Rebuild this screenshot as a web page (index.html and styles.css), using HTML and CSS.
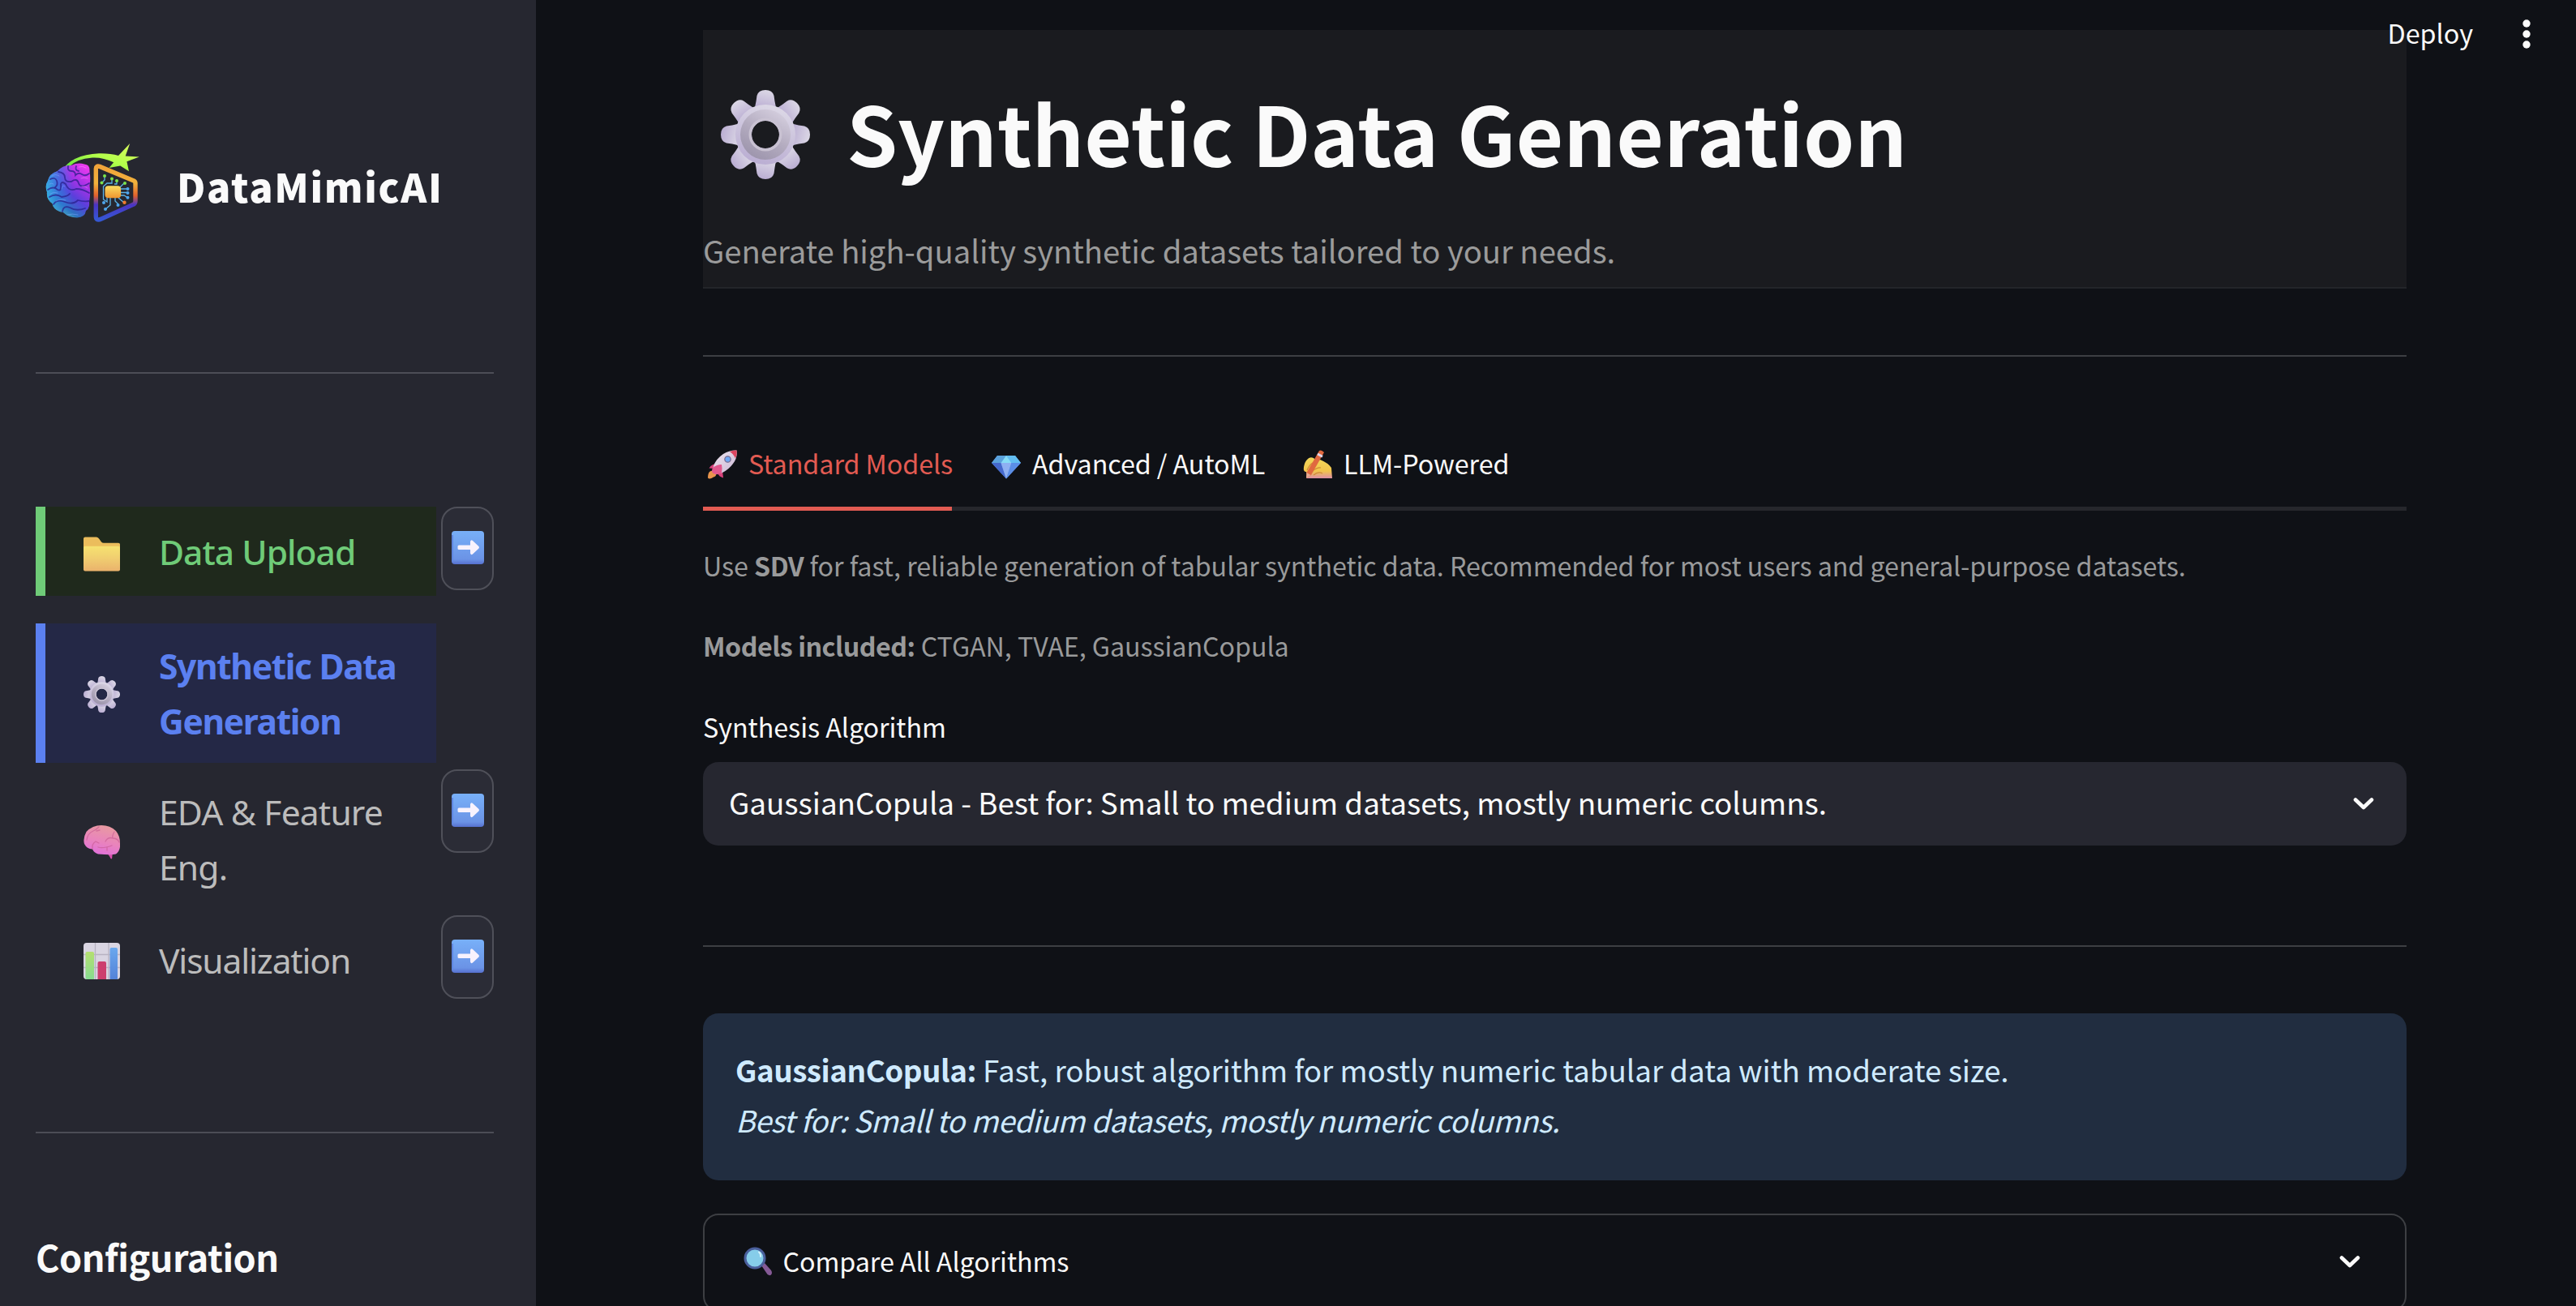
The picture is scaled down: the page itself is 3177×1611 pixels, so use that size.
FILE: index.html
```html
<!DOCTYPE html>
<html lang="en">
<head>
<meta charset="utf-8">
<title>DataMimicAI</title>
<link rel="stylesheet" href="styles.css">
</head>
<body>
<svg class="defs" aria-hidden="true">
  <defs>
    <linearGradient id="gearFill" x1="0.6" y1="0" x2="0.3" y2="1"><stop offset="0" stop-color="#dcd8e6"/><stop offset="1" stop-color="#b9acd2"/></linearGradient>
    <linearGradient id="gearRing" x1="0.8" y1="0" x2="0.2" y2="1"><stop offset="0" stop-color="#d6d0e0"/><stop offset="0.5" stop-color="#b4acc0"/><stop offset="1" stop-color="#9a92aa"/></linearGradient>
    <linearGradient id="arrowFill" x1="0" y1="0" x2="0" y2="1"><stop offset="0" stop-color="#78b0f8"/><stop offset="0.85" stop-color="#6b93e6"/><stop offset="1" stop-color="#5670cf"/></linearGradient>
    <symbol id="gear" viewBox="0 0 110 110">
      <g fill="url(#gearFill)">
        <g id="teeth">
          <path d="M40 24 Q43 20 43.500 14 L44.500 7 Q46.500 0 55 0 Q63.500 0 65.500 7 L66.500 14 Q67 20 70 24Z"/>
          <path d="M40 86 Q43 90 43.500 96 L44.500 103 Q46.500 110 55 110 Q63.500 110 65.500 103 L66.500 96 Q67 90 70 86Z"/>
        </g>
        <use href="#teeth" transform="rotate(90 55 55)"/>
        <use href="#teeth" transform="rotate(45 55 55)"/>
        <use href="#teeth" transform="rotate(-45 55 55)"/>
        <path fill-rule="evenodd" d="M55 18a37 37 0 1 0 0 74a37 37 0 1 0 0-74ZM55 38a17 17 0 1 1 0 34a17 17 0 1 1 0-34Z"/>
      </g>
      <path fill="url(#gearRing)" fill-rule="evenodd" d="M55 24a31 31 0 1 0 0 62a31 31 0 1 0 0-62ZM55 38a17 17 0 1 1 0 34a17 17 0 1 1 0-34Z"/>
      <circle cx="55" cy="55" r="19" fill="none" stroke="#c9c2d2" stroke-width="3"/>
    </symbol>
    <symbol id="arrow" viewBox="0 0 40 41">
      <rect width="40" height="41" rx="4" fill="url(#arrowFill)"/>
      <path d="M1 5V37" stroke="#5f86e0" stroke-width="2"/>
      <path d="M9 17.500H23V13Q24 10 26 12L33.500 19Q34.500 20.300 33.500 21.500L26 28.500Q24 30.500 23 27.500V23H9Q7.500 23 7.500 21.500V19Q7.500 17.500 9 17.500Z" fill="#f8f2fd"/>
    </symbol>
    <symbol id="chevron" viewBox="0 0 26 17">
      <path d="M3 3.500L13 13L23 3.500" fill="none" stroke="#fafafa" stroke-width="4.600" stroke-linecap="round" stroke-linejoin="round"/>
    </symbol>
  </defs>
</svg>

<aside class="sidebar">
  <div class="brand">
    <svg class="brand-logo" viewBox="0 0 116 97">
      <defs>
        <linearGradient id="brainBase" x1="0.9" y1="0" x2="0.25" y2="1"><stop offset="0" stop-color="#f43cf0"/><stop offset="0.3" stop-color="#a932e6"/><stop offset="0.55" stop-color="#5a3fdc"/><stop offset="0.78" stop-color="#2c73c0"/><stop offset="1" stop-color="#66dfa8"/></linearGradient>
        <linearGradient id="brainEdge" x1="0" y1="0" x2="1" y2="0"><stop offset="0" stop-color="#37b6e6" stop-opacity="0.9"/><stop offset="0.35" stop-color="#2f7fe0" stop-opacity="0.5"/><stop offset="0.6" stop-color="#2f7fe0" stop-opacity="0"/></linearGradient>
        <linearGradient id="frame" x1="0" y1="0" x2="0" y2="1"><stop offset="0" stop-color="#f0a43a"/><stop offset="0.32" stop-color="#f2b23c"/><stop offset="0.55" stop-color="#e2622c"/><stop offset="0.72" stop-color="#4a34c4"/><stop offset="1" stop-color="#3557d4"/></linearGradient>
        <linearGradient id="comet" x1="0" y1="1" x2="1" y2="0"><stop offset="0" stop-color="#4fd83c"/><stop offset="0.5" stop-color="#b2ff4a"/><stop offset="1" stop-color="#dcf860"/></linearGradient>
        <linearGradient id="chip" x1="0" y1="0" x2="0" y2="1"><stop offset="0" stop-color="#fbdc60"/><stop offset="1" stop-color="#ee9530"/></linearGradient>
      </defs>
      <path d="M20 34Q32 14 66 12.300Q80 12 90 15L104.200 0L98.700 15.600L115.800 16.600L100.400 22.300L103 34.300L92.300 27.600L78.600 30L84.200 23.300Q70 16.800 58 17.600Q38 19 29 29Z" fill="url(#comet)"/>
      <path d="M48 25.500Q55 26 54.500 34Q56 44 54.500 52Q56 62 54 72Q55 80 50 83Q49 91 39 91.500Q28 91 22 85Q10 83 8.500 74Q1 69 2 60Q-1 52 3 46Q5 37 15 34Q22 26 32 27Q40 23 48 25.500Z" fill="url(#brainBase)"/>
      <path d="M48 25.500Q55 26 54.500 34Q56 44 54.500 52Q56 62 54 72Q55 80 50 83Q49 91 39 91.500Q28 91 22 85Q10 83 8.500 74Q1 69 2 60Q-1 52 3 46Q5 37 15 34Q22 26 32 27Q40 23 48 25.500Z" fill="url(#brainEdge)"/>
      <g fill="none" stroke-linecap="round" stroke-width="1.800" stroke="#2a1f8c" stroke-opacity="0.75">
        <path d="M28 28Q27 34 32 34T37 39Q41 35 45 38T54 37"/>
        <path d="M16 35Q24 36 24 42T32 47Q39 42 41 49T54 49"/>
        <path d="M6 44Q12 41 14 46T12 54"/>
        <path d="M3 57Q10 52 15 57Q20 60 19 50Q20 46 25 50Q29 60 38 56Q46 56 54 61"/>
        <path d="M5 66Q13 61 20 66Q28 65 30 62"/>
        <path d="M10 75Q14 68 24 72Q34 76 40 70Q47 72 54 71"/>
        <path d="M21 84Q22 76 30 79Q38 84 49 80"/>
        <path d="M38 28Q36 33 41 34"/>
      </g>
      <g fill="none" stroke-linecap="round" stroke-width="1" stroke="#7fa8ff" stroke-opacity="0.5">
        <path d="M8 40Q12 37 17 40M5 50Q8 48 10 50M20 56Q21 50 24 53M6 62Q10 59 15 61M13 71Q18 68 25 70M27 88Q33 86 40 88"/>
        <path stroke="#ff8cff" d="M41 29Q46 27 50 30M44 43Q48 41 52 43M45 53Q49 52 52 55"/>
      </g>
      <path d="M62.300 31Q62.300 27 67 28.400L109 46Q111 47 111 49V71Q111 73.500 109 75L69 93Q62.300 96 62.300 90Z" fill="none" stroke="url(#frame)" stroke-width="5.400"/>
      <path d="M73 40V45L70 48M82 44V49H76L71.500 53V69L76 72V67M88 46V50H85M98 48L92 54M93 56H101M93 60.500H101M93 64H97L101 66.500M80 67V76L74 81M86 67V71L90 75M90 67L97 73" fill="none" stroke="#5cb4e8" stroke-width="1.300"/>
      <g fill="#7be34a"><circle cx="73" cy="40" r="2"/><circle cx="69.500" cy="48.500" r="2"/><circle cx="82" cy="43.500" r="2"/><circle cx="88" cy="46" r="2"/><circle cx="98" cy="49" r="2"/></g>
      <g fill="#4ea6ee"><circle cx="101.500" cy="56" r="2"/><circle cx="101.500" cy="61" r="2"/><circle cx="101.500" cy="66.800" r="2"/><circle cx="72" cy="73" r="2"/><circle cx="74" cy="81" r="2"/><circle cx="89.500" cy="76" r="2"/></g>
      <circle cx="97.500" cy="72.700" r="2.200" fill="#ee7a2e"/>
      <rect x="73.500" y="52.300" width="19.600" height="15" rx="4" fill="url(#chip)"/>
    </svg>
    <span class="brand-name">DataMimicAI</span>
  </div>

  <hr class="rule">

  <nav class="steps">
    <div class="step step-done">
      <div class="step-card">
        <svg class="step-icon step-icon-low" viewBox="0 0 45 45">
          <defs><linearGradient id="folderFront" x1="0" y1="0" x2="0" y2="1"><stop offset="0" stop-color="#f6e270"/><stop offset="0.5" stop-color="#f0cd70"/><stop offset="1" stop-color="#eab26c"/></linearGradient></defs>
          <path d="M2 1.500H16Q18 1.500 19.500 4L22 7.500Q23 8.700 25 8.700H43Q45 8.700 45 10.500V20H0V3.500Q0 1.500 2 1.500Z" fill="#ebbd5c"/>
          <path d="M0 14.500Q0 12.800 2 12.800H43Q45 12.800 45 14.500V41.500Q45 43.500 43 43.500H2Q0 43.500 0 41.500Z" fill="url(#folderFront)"/>
        </svg>
        <span class="step-label">Data Upload</span>
      </div>
      <button class="step-go"><svg viewBox="0 0 40 41"><use href="#arrow"/></svg></button>
    </div>
    <div class="step step-current">
      <div class="step-card">
        <svg class="step-icon" viewBox="0 0 110 110"><use href="#gear"/></svg>
        <span class="step-label">Synthetic Data Generation</span>
      </div>
    </div>
    <div class="step">
      <div class="step-card">
        <svg class="step-icon step-icon-low" viewBox="0 0 45 45">
          <defs><linearGradient id="pinkBrain" x1="0.6" y1="0" x2="0.3" y2="1"><stop offset="0" stop-color="#e89aa0"/><stop offset="0.55" stop-color="#e983bd"/><stop offset="1" stop-color="#e06fdc"/></linearGradient></defs>
          <path d="M29 36L36 35L35 43.500Q33 43.500 32.500 41Z" fill="#d94fae"/>
          <path d="M22 2Q33 2 40 9Q45 15 45 24Q46 33 40 37.500Q35 39 18 37.500Q13 36 11 31.500Q4 31 1 25Q-1 18 3.500 10Q11 2 22 2Z" fill="url(#pinkBrain)"/>
          <path d="M19 4Q15 8 12 9Q5 12 4 20M16 9L20 8M38 10Q35 15 36 18Q30 16 27 22M36 18Q42 18 44 23M11 31Q10 25 15 22L19 24M18 29Q24 31 35 27M29 29V33" fill="none" stroke="#c95a93" stroke-width="1.300" stroke-linecap="round" stroke-opacity="0.65"/>
        </svg>
        <span class="step-label">EDA &amp; Feature Eng.</span>
      </div>
      <button class="step-go"><svg viewBox="0 0 40 41"><use href="#arrow"/></svg></button>
    </div>
    <div class="step">
      <div class="step-card">
        <svg class="step-icon" viewBox="0 0 45 45">
          <defs>
            <linearGradient id="barGreen" x1="0" y1="0" x2="0" y2="1"><stop offset="0" stop-color="#b5df70"/><stop offset="1" stop-color="#86dc90"/></linearGradient>
            <linearGradient id="barBlue" x1="0" y1="0" x2="0" y2="1"><stop offset="0" stop-color="#6aa8ee"/><stop offset="1" stop-color="#5482d8"/></linearGradient>
          </defs>
          <rect width="45" height="45" rx="4" fill="#d9d5e2"/>
          <path d="M0 14.500H45M0 30.500H45M14.500 0V45M31 0V45" stroke="#b8b3c2" stroke-width="1.300"/>
          <path d="M2.500 13Q2.500 11 4.500 11H11Q13 11 13 13V45H4Q2.500 45 2.500 43Z" fill="url(#barGreen)"/>
          <path d="M17.500 25Q17.500 23 19.500 23H26Q28 23 28 25V45H17.500Z" fill="#cc3f6e"/>
          <path d="M32.500 8Q32.500 6 34.500 6H40Q42 6 42 8V45H32.500Z" fill="url(#barBlue)"/>
        </svg>
        <span class="step-label">Visualization</span>
      </div>
      <button class="step-go"><svg viewBox="0 0 40 41"><use href="#arrow"/></svg></button>
    </div>
  </nav>

  <hr class="rule rule-config">
  <h2 class="config-title">Configuration</h2>
</aside>

<main class="main">
  <header class="hero">
    <h1 class="hero-title">
      <svg class="hero-gear" viewBox="0 0 110 110"><use href="#gear"/></svg>
      <span>Synthetic Data Generation</span>
    </h1>
    <p class="hero-sub">Generate high-quality synthetic datasets tailored to your needs.</p>
  </header>

  <hr class="divider">

  <div class="tabs">
    <div class="tab tab-active">
      <svg class="tab-icon" viewBox="0 0 36 36">
        <defs><linearGradient id="hull" x1="0" y1="0" x2="1" y2="1"><stop offset="0" stop-color="#efe6ee"/><stop offset="1" stop-color="#c9b6d6"/></linearGradient></defs>
        <path d="M2 27Q6 24 10 28Q11 33 7 33.500Q2 37 0 34.500Q0 29 2 27Z" fill="#e8944c"/>
        <path d="M11 17Q5 17 1.500 22.500L8 23ZM18 26L19 34.500Q14 33 12 29Z" fill="#d8437c"/>
        <path d="M35.500 .5Q37 9 31 17Q26 24 18 28L9 30Q5 27 7 20Q10 11 19 5Q27 0 35.500 .5Z" fill="url(#hull)"/>
        <path d="M35.500 .5Q36.500 5 34 10.500Q31 4 27 2.200Q31 0 35.500 .5Z" fill="#dc4560"/>
        <path d="M17 18Q11 18 6 22Q4 26 6 28.500Q11 32 17 28Q18 22 17 18Z" fill="#e2588e"/>
        <circle cx="24.500" cy="11.500" r="3.700" fill="#6fa8f4" stroke="#77688c" stroke-width="1.200"/>
      </svg>
      <span>Standard Models</span>
    </div>
    <div class="tab tab-automl">
      <svg class="tab-icon" viewBox="0 0 36 36">
        <path d="M7 7H29L36 16L18 35.500L0 16Z" fill="#5a90e4"/>
        <path d="M7 7H18L11.500 16H0Z" fill="#5ba2dc"/>
        <path d="M18 7H29L36 16H24.500Z" fill="#62bdf0"/>
        <path d="M18 7L24.500 16H11.500Z" fill="#86dcf6"/>
        <path d="M0 16H11.500L18 35.500Z" fill="#4568cc"/>
        <path d="M11.500 16H24.500L18 35.500Z" fill="#8fb0f2"/>
        <path d="M36 16H24.500L18 35.500Z" fill="#5b8ee6"/>
      </svg>
      <span>Advanced / AutoML</span>
    </div>
    <div class="tab">
      <svg class="tab-icon" viewBox="0 0 36 36">
        <defs><linearGradient id="hand" x1="0" y1="0" x2="0" y2="1"><stop offset="0" stop-color="#f2d75a"/><stop offset="0.65" stop-color="#f2c44c"/><stop offset="1" stop-color="#dd8fa6"/></linearGradient></defs>
        <path d="M5 12Q8 8 13 10L17 14L21 12Q31 16 35 22L36 35H5L4 27Q0 27 1 21Q2 15 5 12Z" fill="url(#hand)"/>
        <path d="M10 27Q18 21 22 22M13 31Q19 26 24 29M5 25Q8 18 12 16" fill="none" stroke="#cf8a35" stroke-width="1.200"/>
        <path d="M20 1Q22-.500 26 3L10 31L4 35L4.500 28Z" fill="#e0683f"/>
        <path d="M18.700 3.800L24.700 7L23.300 9.500L17.300 6.200Z" fill="#ded6ea"/>
        <path d="M4.500 28L9.700 31L4 35Z" fill="#e3aa94"/>
      </svg>
      <span>LLM-Powered</span>
    </div>
  </div>

  <p class="caption caption-lead">Use <b>SDV</b> for fast, reliable generation of tabular synthetic data. Recommended for most users and general-purpose datasets.</p>
  <p class="caption caption-models"><b>Models included:</b> CTGAN, TVAE, GaussianCopula</p>

  <label class="field-label">Synthesis Algorithm</label>
  <div class="select">
    <span>GaussianCopula - Best for: Small to medium datasets, mostly numeric columns.</span>
    <svg class="chevron" viewBox="0 0 26 17"><use href="#chevron"/></svg>
  </div>

  <hr class="divider divider-info">

  <section class="info">
    <p><b>GaussianCopula:</b> Fast, robust algorithm for mostly numeric tabular data with moderate size.</p>
    <p class="info-best"><i>Best for: Small to medium datasets, mostly numeric columns.</i></p>
  </section>

  <section class="expander">
    <svg class="expander-icon" viewBox="0 0 36 36">
      <path d="M22 23L26 20L34 29Q36 32 34 34.500Q32 36 29.500 34Z" fill="#855a96"/>
      <circle cx="14" cy="14" r="12" fill="#86cdea" stroke="#4a5f9c" stroke-width="3"/>
      <path d="M19 6.500Q21.500 8.500 21 12" fill="none" stroke="#d3f1fb" stroke-width="2" stroke-linecap="round"/>
    </svg>
    <span class="expander-title">Compare All Algorithms</span>
    <svg class="chevron expander-chevron" viewBox="0 0 26 17"><use href="#chevron"/></svg>
  </section>
</main>

<div class="toolbar">
  <span>Deploy</span>
  <svg class="toolbar-menu" viewBox="0 0 12 38"><g fill="#fafafa"><circle cx="6" cy="6" r="4.700"/><circle cx="6" cy="19" r="4.700"/><circle cx="6" cy="32" r="4.700"/></g></svg>
</div>
</body>
</html>
```
FILE: styles.css
```css
* { box-sizing: border-box; }

html, body { margin: 0; height: 1611px; overflow: hidden; }

body {
  position: relative;
  display: flex;
  background: #0f1116;
  color: #fafafa;
  font-family: "Noto Sans CJK SC", sans-serif;
  font-size: 32.3px;
}

h1, h2, p { margin: 0; font-weight: 400; white-space: nowrap; }
hr { margin: 0; border: 0; height: 2px; }
svg { display: block; flex: none; }
span { white-space: nowrap; }
.defs { position: absolute; width: 0; height: 0; }

/* Sidebar */
.sidebar {
  flex: none;
  width: 661px;
  height: 1611px;
  padding: 177px 52px 0 44px;
  background: #262730;
  overflow: hidden;
}
.brand { display: flex; align-items: flex-start; height: 97px; padding-left: 12px; }
.brand-logo { width: 116px; height: 97px; }
.brand-name {
  margin: 22px 0 0 46px;
  font-size: 48.5px;
  font-weight: 900;
  line-height: 60px;
  letter-spacing: 1.7px;
}
.rule { margin-top: 185px; background: #4c4d56; }

.steps { display: flex; flex-direction: column; gap: 8px; margin-top: 164px; }
.step { display: grid; grid-template-columns: 494px 65px; column-gap: 6px; align-items: start; }
.step-card {
  display: flex;
  align-items: center;
  gap: 48px;
  padding: 19px 0 17px 47px;
  border-left: 12px solid transparent;
  color: #bcbcbc;
}
.step-icon { width: 45px; height: 45px; }
.step-icon-low { margin-top: 4px; }
.step-label {
  font-family: "Noto Sans", sans-serif;
  font-size: 42.5px;
  line-height: 68px;
  letter-spacing: -0.8px;
  white-space: normal;
}
.step:first-child .step-card, .step:last-child .step-card { padding-top: 22px; padding-bottom: 20px; }
.step:last-child .step-label { letter-spacing: -1.15px; }
.step-done { margin-bottom: 26px; }
.step-done .step-card { background: #1f291c; border-color: #6fcb78; color: #6fcb78; }
.step-done .step-label { font-weight: 500; letter-spacing: -0.95px; }
.step-current .step-card { background: #242846; border-color: #5b80f0; color: #5b80f0; }
.step-current .step-label { font-weight: 700; letter-spacing: -1.35px; }

.step-go {
  display: flex;
  align-items: center;
  justify-content: center;
  height: 103px;
  padding: 0 0 2px;
  border: 2px solid #4f5059;
  border-radius: 20px;
  background: #2b2c36;
}
.step-go svg { width: 40px; height: 41px; }

.rule-config { margin-top: 157px; }
.config-title {
  margin-top: 122px;
  font-size: 45px;
  font-weight: 700;
  line-height: 60px;
  letter-spacing: -0.5px;
}

/* Main column */
.main { flex: none; width: 2101px; margin-left: 206px; padding-top: 37px; }

.hero { padding: 60px 0 15px; background: #1a1b1f; border-bottom: 2px solid #232529; }
.hero-title {
  display: flex;
  align-items: center;
  padding-left: 22px;
  font-size: 101.2px;
  font-weight: 700;
  line-height: 130px;
  letter-spacing: -0.05px;
}
.hero-gear { width: 110px; height: 110px; margin: 8px 45px 0 0; }
.hero-sub { margin-top: 52px; font-size: 38.26px; line-height: 60px; letter-spacing: -0.03px; color: #9b9b9b; }

.divider { margin-top: 82px; background: #3d3f43; }

.tabs { display: flex; gap: 44px; margin-top: 101px; box-shadow: inset 0 -5px #26272c; }
.tab {
  display: flex;
  gap: 14px;
  padding: 0 0 24px 5px;
  border-bottom: 5px solid transparent;
  line-height: 60px;
  letter-spacing: -0.08px;
}
.tab-active { width: 307px; padding-left: 6px; border-color: #e25b52; color: #e25b52; }
.tab-automl { width: 340px; }
.tab-icon { width: 36px; height: 36px; margin-top: 14px; }

.caption { line-height: 58px; font-size: 32.25px; letter-spacing: -0.06px; color: #999a9b; }
.caption b { letter-spacing: -0.5px; }
.caption-lead { margin-top: 38px; }
.caption-models { margin-top: 41px; }

.field-label { display: block; margin-top: 46px; line-height: 50px; letter-spacing: -0.06px; }
.select {
  display: flex;
  align-items: center;
  justify-content: space-between;
  height: 103px;
  margin-top: 19px;
  padding: 0 40px 5px 32px;
  border-radius: 19px;
  background: #262730;
  font-size: 36.83px;
  letter-spacing: -0.03px;
}
.chevron { width: 26px; height: 17px; margin-top: 4px; }

.divider-info { margin-top: 123px; }

.info {
  height: 206px;
  margin-top: 82px;
  padding: 38px 40px;
  border-radius: 19px;
  background: #212d40;
  color: #cfeaff;
  font-size: 36.85px;
  line-height: 62px;
  letter-spacing: -0.05px;
}
.info b { letter-spacing: -0.5px; }
.info .info-best { letter-spacing: -0.55px; }

.expander {
  display: flex;
  align-items: center;
  height: 121px;
  margin-top: 41px;
  padding: 0 55px 6px 48px;
  border: 2px solid #3d3f43;
  border-radius: 19px;
}
.expander-icon { width: 36px; height: 36px; margin-top: 2px; }
.expander-title { flex: 1; margin-left: 12.5px; letter-spacing: -0.08px; }
.expander-chevron { margin-top: 3px; }

/* Toolbar laid over the page's top right corner */
.toolbar {
  position: absolute;
  top: 10px;
  right: 55px;
  display: flex;
  align-items: center;
  gap: 60px;
  line-height: 60px;
}
.toolbar-menu { width: 12px; height: 38px; margin-top: 3px; }
```
